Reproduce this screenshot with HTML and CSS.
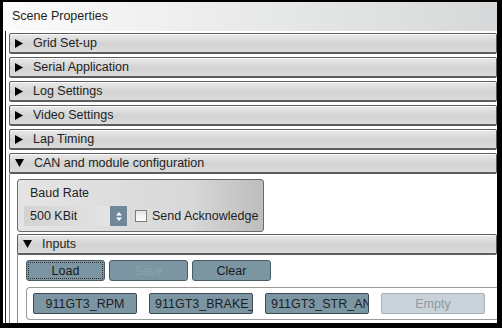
FILE: index.html
```html
<!DOCTYPE html>
<html lang="en">
<head>
  <meta charset="UTF-8" />
  <title>Scene Properties</title>
  <link rel="stylesheet" href="styles.css">
</head>
<body>
  <div class="frame">
    <div class="title">Scene Properties</div>

    <div class="sections">
      <div class="hdr"><svg class="arrow" width="8" height="9" viewBox="0 0 8 9"><path d="M0 0 L8 4.5 L0 9 Z"/></svg>Grid Set-up</div>
      <div class="hdr"><svg class="arrow" width="8" height="9" viewBox="0 0 8 9"><path d="M0 0 L8 4.5 L0 9 Z"/></svg>Serial Application</div>
      <div class="hdr"><svg class="arrow" width="8" height="9" viewBox="0 0 8 9"><path d="M0 0 L8 4.5 L0 9 Z"/></svg>Log Settings</div>
      <div class="hdr"><svg class="arrow" width="8" height="9" viewBox="0 0 8 9"><path d="M0 0 L8 4.5 L0 9 Z"/></svg>Video Settings</div>
      <div class="hdr"><svg class="arrow" width="8" height="9" viewBox="0 0 8 9"><path d="M0 0 L8 4.5 L0 9 Z"/></svg>Lap Timing</div>
      <div class="hdr"><svg class="arrow" width="9" height="8" viewBox="0 0 9 8"><path d="M0 0 L9 0 L4.5 8 Z"/></svg>CAN and module configuration</div>

      <div class="can-body">
        <div class="group">
          <div class="group-label">Baud Rate</div>
          <div class="group-row">
            <div class="select">
              <span>500 KBit</span>
              <span class="spin">
                <svg width="6" height="9" viewBox="0 0 6 9"><path d="M0 3.5 L3 0 L6 3.5 Z M0 5.5 L3 9 L6 5.5 Z" fill="#fff"/></svg>
              </span>
            </div>
            <span class="check"></span>
            <span class="check-label">Send Acknowledge</span>
          </div>
        </div>

        <div class="hdr sub"><svg class="arrow" width="9" height="8" viewBox="0 0 9 8"><path d="M0 0 L9 0 L4.5 8 Z"/></svg>Inputs</div>
        <div class="inputs-body">
          <div class="btn-row">
            <button class="btn focus">Load</button>
            <button class="btn disabled">Save</button>
            <button class="btn">Clear</button>
          </div>
          <div class="slots">
            <div class="slot">911GT3_RPM</div>
            <div class="slot clip">911GT3_BRAKE_</div>
            <div class="slot clip">911GT3_STR_AN</div>
            <div class="slot empty">Empty</div>
          </div>
        </div>
      </div>
    </div>
  </div>
</body>
</html>
```

FILE: styles.css
```css
* {
  box-sizing: border-box;
}

body {
  margin: 0;
  padding: 0;
  width: 502px;
  height: 328px;
  overflow: hidden;
  font-family: 'Liberation Sans', Arial, sans-serif;
  font-size: 12.5px;
  color: #1e1e1e;
  background: #fff;
}

.frame {
  width: 502px;
  height: 328px;
  border-top: 2px solid #000;
  border-left: 3px solid #000;
  border-right: 5px solid #000;
  border-bottom: 5px solid #000;
  overflow: hidden;
  background: #fff;
}

.title {
  height: 29px;
  padding: 7px 0 0 9px;
  background: linear-gradient(90deg, #fbfbfb, #d6d8d9);
}

.sections {
  border-left: 1px solid #222;
  margin-left: 2px;
  padding: 2px 0 0 3px;
  display: flex;
  flex-direction: column;
  gap: 3px;
  height: 100%;
}

.hdr {
  height: 21px;
  display: flex;
  align-items: center;
  border: 1px solid #5d5d5d;
  border-bottom-width: 2px;
  border-radius: 2px;
  background: linear-gradient(#e9e9e9, #d2d2d2 55%, #dcdcdc);
  box-shadow: inset 0 1px 0 #fafafa;
}

.arrow {
  margin: 0 10px 0 5px;
  fill: #000;
  flex: none;
}

.can-body {
  margin-top: -3px;
  border-left: 1px solid #8a8a8a;
  padding: 5px 0 0 7px;
  display: flex;
  flex-direction: column;
  flex: 1;
}

.group {
  width: 247px;
  height: 53px;
  border: 1px solid #6a6a6a;
  border-radius: 3px;
  background: linear-gradient(90deg, #e4e4e4, #d8d8d8 70%, #bdbdbd);
  padding: 6px 0 0 6px;
}

.group-label {
  padding-left: 6px;
  height: 20px;
}

.group-row {
  display: flex;
  align-items: center;
}

.select {
  width: 103px;
  height: 20px;
  display: flex;
  align-items: center;
  justify-content: space-between;
  padding-left: 6px;
  background: linear-gradient(90deg, #d3d3d3, #e7e7e7);
}

.spin {
  width: 17px;
  height: 20px;
  background: #6f8898;
  display: flex;
  align-items: center;
  justify-content: center;
}

.check {
  width: 12px;
  height: 12px;
  margin-left: 8px;
  border: 1px solid #7d7d7d;
  background: linear-gradient(#e6e6e6, #fff);
}

.check-label {
  margin-left: 5px;
}

.hdr.sub {
  margin-top: 2px;
  height: 21px;
}

.inputs-body {
  flex: 1;
  border-left: 1px solid #8a8a8a;
  padding: 5px 0 0 8px;
}

.btn-row {
  display: flex;
  gap: 4px;
}

.btn {
  width: 79px;
  height: 21px;
  padding: 0;
  font-family: inherit;
  font-size: 12.5px;
  color: #1a1a1a;
  background: #7c95a3;
  border: 1px solid #4b5b64;
  border-radius: 3px;
}

.btn.focus {
  outline: 1px dotted #333;
  outline-offset: -3px;
}

.btn.disabled {
  color: #8da2ad;
}

.slots {
  margin-top: 6px;
  height: 33px;
  border: 1px solid #9a9a9a;
  border-right: none;
  border-radius: 4px 0 0 4px;
  display: flex;
  align-items: center;
  gap: 12px;
  padding-left: 6px;
}

.slot {
  width: 104px;
  height: 21px;
  display: flex;
  align-items: center;
  justify-content: center;
  white-space: nowrap;
  overflow: hidden;
  background: #7c95a3;
  border: 1px solid #3d4a52;
  border-radius: 2px;
}

.slot.clip {
  justify-content: flex-start;
  padding-left: 5px;
}

.slot.empty {
  background: #c8d2d8;
  border-color: #a6b2b9;
  color: #8a9aa3;
}
```
